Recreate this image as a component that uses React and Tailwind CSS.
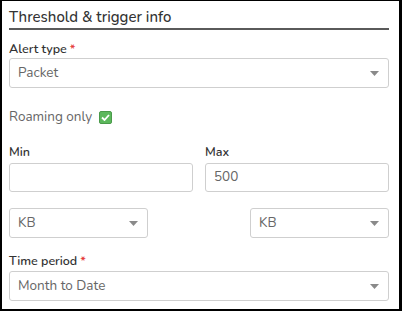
import React from 'react';

function Caret() {
  return (
    <svg width="9" height="5" viewBox="0 0 9 5" className="shrink-0">
      <path d="M0 0 H9 L4.5 5 Z" fill="#8a8a8a" />
    </svg>
  );
}

function SelectBox({ value, className = '' }) {
  return (
    <div className={`h-[30px] border border-[#cfcfcf] rounded-[3px] bg-white flex items-center justify-between pl-[8px] pr-[9px] ${className}`}>
      <span className="text-[13.5px] text-[#666]">{value}</span>
      <Caret />
    </div>
  );
}

function Label({ children, required }) {
  return (
    <div className="text-[12.5px] leading-[16px] font-semibold text-[#333]">
      {children}
      {required && <span className="text-[#e53935] ml-[3px]">*</span>}
    </div>
  );
}

export default function App() {
  return (
    <div
      className="w-[402px] h-[311px] bg-white border-black border-t border-l-2 border-r-[3px] border-b-2 pl-[7px] pr-[10px] flex flex-col"
      style={{ fontFamily: 'Nunito, Lato, "Noto Sans", sans-serif' }}
    >
      <div className="pt-[5px] text-[15px] leading-[22px] font-medium text-[#333] border-b-2 border-[#5a5a5a]">
        Threshold &amp; trigger info
      </div>

      <div className="mt-[11px]">
        <Label required>Alert type</Label>
        <SelectBox value="Packet" className="mt-[1px]" />
      </div>

      <div className="mt-[19px] h-[20px] flex items-center gap-[7px]">
        <span className="text-[13.5px] text-[#666]">Roaming only</span>
        <span className="w-[13px] h-[13px] rounded-[2px] bg-[#5cb85c] border border-[#4a9a4a] flex items-center justify-center">
          <svg width="9" height="7" viewBox="0 0 9 7">
            <path d="M1 3.5 L3.5 6 L8 1" fill="none" stroke="white" strokeWidth="1.8" />
          </svg>
        </span>
      </div>

      <div className="mt-[17px] grid grid-cols-2 gap-x-[12px]">
        <div>
          <Label>Min</Label>
          <div className="mt-[3px] h-[29px] border border-[#cfcfcf] rounded-[3px]" />
        </div>
        <div>
          <Label>Max</Label>
          <div className="mt-[3px] h-[29px] border border-[#cfcfcf] rounded-[3px] flex items-center pl-[8px] text-[13.5px] text-[#666]">
            500
          </div>
        </div>
      </div>

      <div className="mt-[16px] flex justify-between">
        <SelectBox value="KB" className="w-[139px]" />
        <SelectBox value="KB" className="w-[139px]" />
      </div>

      <div className="mt-[15px]">
        <Label required>Time period</Label>
        <SelectBox value="Month to Date" className="mt-[2px]" />
      </div>
    </div>
  );
}
